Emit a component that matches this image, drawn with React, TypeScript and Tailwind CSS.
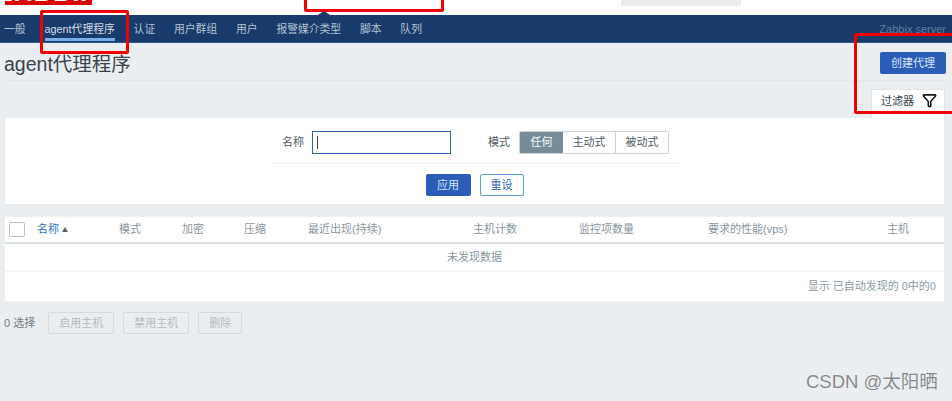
import { Filter } from 'lucide-react'

const navItems = ['认证', '用户群组', '用户', '报警媒介类型', '脚本', '队列']

const topItems = [
  { label: '监测', width: 'w-[43px]' },
  { label: '资产记录', width: 'w-[69px]' },
  { label: '报表', width: 'w-[45px]' },
  { label: '配置', width: 'w-[45px]' },
  { label: '管理', width: 'w-[30px]' },
]

const columns = [
  { label: '模式', width: 'w-[63px]' },
  { label: '加密', width: 'w-[62px]' },
  { label: '压缩', width: 'w-[64px]' },
  { label: '最近出现(持续)', width: 'w-[165px]' },
  { label: '主机计数', width: 'w-[106px]' },
  { label: '监控项数量', width: 'w-[129px]' },
  { label: '要求的性能(vps)', width: 'w-[179px]' },
  { label: '主机', width: 'w-[40px]' },
]

export default function App() {
  return (
    <div className="relative h-[401px] w-[952px] overflow-hidden bg-[#ebeef0] font-['Liberation_Sans','Noto_Sans_CJK_SC',sans-serif] text-[11px] text-[#4f5b62]">
      {/* Cut off top bar */}
      <div className="flex h-[15px] items-start overflow-hidden bg-white">
        <div className="ml-[5px] flex h-[5px] w-[87px] justify-center overflow-hidden bg-[#dc0000]">
          <span className="mt-[-17px] text-[24px] font-bold leading-[20px] tracking-[2px] text-white">ZABBIX</span>
        </div>
        <div className="ml-[18px] flex h-[2px] w-[500px] overflow-hidden text-[#a3aaaf]">
          {topItems.map((item) => (
            <span key={item.label} className={`${item.width} mt-[-12px] text-xs leading-[14px]`}>
              {item.label}
            </span>
          ))}
        </div>
        <div className="ml-[11px] h-[6px] w-[120px] bg-[#ececec]" />
      </div>

      {/* Sub menu */}
      <nav className="flex h-[28px] items-start justify-between border-b border-[#2a5a8c] bg-[#193b6b] pr-[6px] text-[10.8px] text-[#b5c3d3]">
        <div className="flex items-start pl-[4px]">
          <span className="mt-[6px] leading-[17px]">一般</span>
          <span className="ml-[19px] mt-[6px] border-b-[3px] border-[#75aee8] leading-[17px] text-[#d5dde6]">
            agent代理程序
          </span>
          {navItems.map((item) => (
            <span key={item} className="ml-[18.8px] mt-[6px] leading-[17px]">
              {item}
            </span>
          ))}
        </div>
        <span className="mt-[6px] text-[11px] leading-[17px] text-[#5f7d9f]">Zabbix server</span>
      </nav>

      {/* Title */}
      <div className="ml-[4px] mr-[6px] flex h-[38px] items-start justify-between border-b border-[#e4e7ea]">
        <h1 className="mt-[6px] text-[19.5px] font-normal leading-[30px] text-[#39434a]">agent代理程序</h1>
        <button className="mt-[9px] h-[22px] w-[66px] rounded-[2px] bg-[#2b5cb8] text-[11px] text-[#d7e6f8]">创建代理</button>
      </div>

      {/* Filter */}
      <div className="mt-[8px] flex justify-end pr-[7px]">
        <div className="flex h-[29px] w-[74px] items-start gap-[8px] rounded-t-[2px] border-x border-t border-[#dfe4e7] bg-white pl-[9px] pt-[3px] text-[#39434a]">
          <span className="leading-[16px]">过滤器</span>
          <Filter size={15} strokeWidth={2.5} className="text-[#14181b]" />
        </div>
      </div>
      <section className="ml-[4px] mr-[7px] h-[87px] border border-t-0 border-[#e8ebed] bg-white pt-[13px]">
        <div className="ml-[267px] flex h-[33px] w-[406px] items-start justify-between border-b border-[#eef0f2] pl-[10px] pr-[9px]">
          <div className="flex items-center">
            <label className="mr-[8px]">名称</label>
            <div className="flex h-[23px] w-[139px] items-center border border-[#2f66ad] pl-[4px]">
              <div className="h-[13px] w-px bg-[#39434a]" />
            </div>
          </div>
          <div className="flex items-center">
            <label className="mr-[9px]">模式</label>
            <div className="flex h-[23px] overflow-hidden rounded-[2px] border border-[#c9d1d6]">
              <span className="flex w-[43px] items-center justify-center bg-[#768d99] text-white">任何</span>
              <span className="flex w-[53px] items-center justify-center border-r border-[#c9d1d6]">主动式</span>
              <span className="flex w-[52px] items-center justify-center">被动式</span>
            </div>
          </div>
        </div>
        <div className="mt-[10px] flex justify-center gap-[9px]">
          <button className="h-[22px] w-[45px] rounded-[2px] bg-[#2b5cb8] text-[11px] text-[#d7e6f8]">应用</button>
          <button className="h-[22px] w-[44px] rounded-[2px] border border-[#5a9bd8] bg-white text-[11px] text-[#2f66ad]">重设</button>
        </div>
      </section>

      {/* Table */}
      <section className="ml-[4px] mr-[7px] mt-[11px] h-[86px] border border-[#eef0f2] bg-white text-[#8a969d]">
        <div className="flex h-[27px] items-center border-b-2 border-[#dde3e7]">
          <div className="ml-[4px] h-[15px] w-[16px] rounded-[2px] border border-[#b7c2c9]" />
          <div className="ml-[12px] flex w-[82px] items-center gap-[3px]">
            <span className="text-[#2f74c4]">名称</span>
            <span className="h-0 w-0 border-x-[3.5px] border-b-[5px] border-x-transparent border-b-[#59666e]" />
          </div>
          {columns.map((col) => (
            <span key={col.label} className={col.width}>
              {col.label}
            </span>
          ))}
        </div>
        <div className="flex h-[28px] items-center justify-center border-b border-[#eef0f2]">未发现数据</div>
        <div className="flex h-[29px] items-center justify-end pr-[8px] text-[#8a9aa4]">显示 已自动发现的 0中的0</div>
      </section>

      {/* Bulk actions */}
      <div className="ml-[4px] mt-[10px] flex items-center text-[#717d84]">
        <span className="mr-[13px]">0 选择</span>
        <button className="h-[22px] w-[66px] rounded-[2px] border border-[#d5dadd] text-[11px] text-[#b3bbc0]">启用主机</button>
        <button className="ml-[9px] h-[22px] w-[66px] rounded-[2px] border border-[#d5dadd] text-[11px] text-[#b3bbc0]">禁用主机</button>
        <button className="ml-[9px] h-[22px] w-[44px] rounded-[2px] border border-[#d5dadd] text-[11px] text-[#b3bbc0]">删除</button>
      </div>

      {/* Screenshot annotations */}
      <div className="absolute left-[40px] top-[10px] h-[44px] w-[89px] rounded-[2px] border-[3px] border-[#f00000]" />
      <div className="absolute left-[304px] top-[-6px] h-[18px] w-[140px] rounded-[2px] border-[3px] border-[#f00000]" />
      <div className="absolute left-[854px] top-[33px] h-[81px] w-[110px] rounded-[2px] border-[3px] border-[#f00000]" />
      <div className="absolute left-[318px] top-[11px] h-0 w-0 border-x-[6px] border-b-[4px] border-x-transparent border-b-[#193b6b]" />

      {/* Watermark */}
      <span className="absolute left-[806px] top-[370px] text-[18.5px] leading-[24px] text-[#85898c] [text-shadow:0_0_1px_#ffffff]">CSDN @太阳晒</span>
    </div>
  )
}
